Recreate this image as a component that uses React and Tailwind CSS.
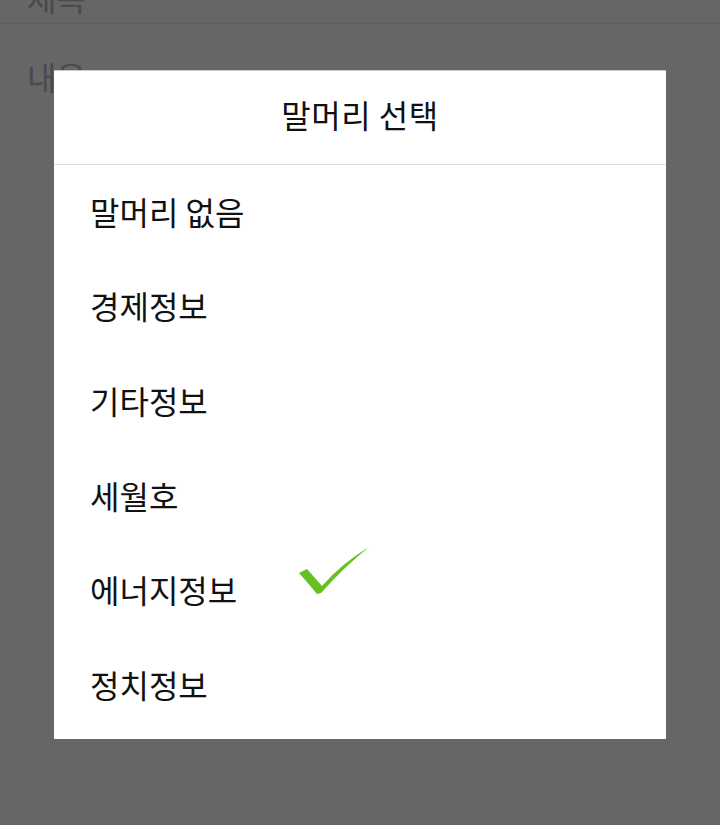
import React from "react";

const items = ["말머리 없음", "경제정보", "기타정보", "세월호", "에너지정보", "정치정보"];

export default function App() {
  return (
    <div
      className="relative w-[720px] h-[825px] overflow-hidden bg-[#666666]"
      style={{ fontFamily: '"Noto Sans CJK KR", "Noto Sans", sans-serif' }}
    >
      {/* dimmed page behind */}
      <div className="flex flex-col">
        <div className="h-[24px] flex items-end pl-[27px] border-b border-[#5e5e5e] overflow-hidden">
          <span className="text-[32px] leading-none text-[#4a4a4a] mb-[10px]">제목</span>
        </div>
        <div className="pl-[27px] pt-[36px]">
          <span className="text-[32px] leading-none text-[#4a4a4a]">내용</span>
        </div>
      </div>

      {/* dialog */}
      <div className="absolute inset-0 pt-[70px] px-[54px]">
        <div className="relative bg-white flex flex-col pb-[6px] border-t border-[#c9c9c9]">
          <div className="h-[94px] flex items-center justify-center border-b border-[#dddddd]">
            <span className="text-[32px] leading-none text-[#111111] tracking-[0.5px] mb-[8px]">말머리 선택</span>
          </div>
          {items.map((t) => (
            <div key={t} className="h-[94.6px] flex items-center pl-[36px]">
              <span className="text-[32px] leading-none text-[#111111] mb-[3px]">{t}</span>
            </div>
          ))}
          <svg
            className="absolute left-[241px] top-[471px]"
            width="80"
            height="60"
            viewBox="0 0 80 60"
          >
            <path
              d="M4 31 L12 27 L27 44 Q46 22 74 5 Q49 25 26 51 L22 52 Q13 41 4 31 Z"
              fill="#64c11f"
            />
          </svg>
        </div>
      </div>
    </div>
  );
}
